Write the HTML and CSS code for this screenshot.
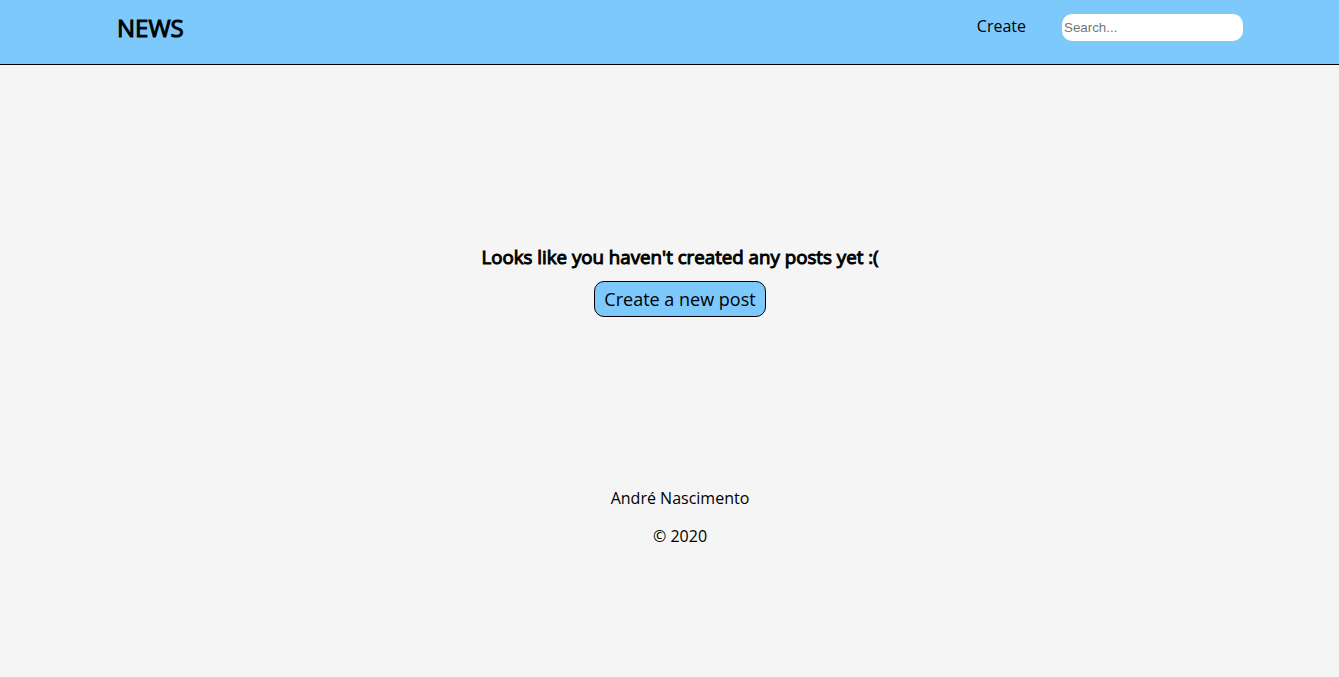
FILE: index.html
```html
<!DOCTYPE html>
<html lang="en">
<head>
<meta charset="utf-8">
<title>News</title>
<link rel="stylesheet" href="styles.css">
</head>
<body>
<header class="header">
  <h2 class="logo">NEWS</h2>
  <nav class="nav">
    <a class="nav-link" href="#create">Create</a>
    <input class="search" type="text" placeholder="Search..." aria-label="Search">
  </nav>
</header>
<main class="empty">
  <h3 class="empty-title">Looks like you haven't created any posts yet :(</h3>
  <a class="button" href="#create">Create a new post</a>
</main>
<footer class="footer">
  <p class="footer-line">André Nascimento</p>
  <p class="footer-line">© 2020</p>
</footer>
</body>
</html>
```
FILE: styles.css
```css
* {
  box-sizing: border-box;
  margin: 0;
  padding: 0;
}

body {
  background: #f5f5f5;
  color: #000;
  font-family: "Open Sans", sans-serif;
  font-size: 16px;
  line-height: 22px;
}

.header {
  display: flex;
  justify-content: space-between;
  align-items: flex-start;
  padding: 12px 96px 20px 117px;
  background: #7dc9fc;
  border-bottom: 1px solid #000;
}

.logo,
.empty-title {
  font-weight: 400;
  -webkit-text-stroke: 1px #000;
}

.logo {
  font-size: 24px;
  line-height: 32px;
}

.nav {
  display: flex;
  align-items: flex-start;
  gap: 36px;
  padding-top: 2px;
}

.nav-link {
  color: inherit;
  line-height: 24px;
  text-decoration: none;
}

.search {
  width: 181px;
  height: 27px;
  padding: 2px;
  border: 0;
  border-radius: 10px;
  background: #fff;
  font-family: "Liberation Sans", Arial, sans-serif;
}

.empty {
  display: flex;
  flex-direction: column;
  align-items: center;
  gap: 12px;
  padding: 180px 0 170px 21px;
}

.empty-title {
  line-height: 24px;
}

.button {
  padding: 5px 9px;
  border: 1px solid #000;
  border-radius: 10px;
  background: #7dc9fc;
  color: inherit;
  font-size: 18px;
  line-height: 24px;
  text-decoration: none;
}

.footer {
  display: flex;
  flex-direction: column;
  align-items: center;
  gap: 16px;
  padding-left: 21px;
}
```
